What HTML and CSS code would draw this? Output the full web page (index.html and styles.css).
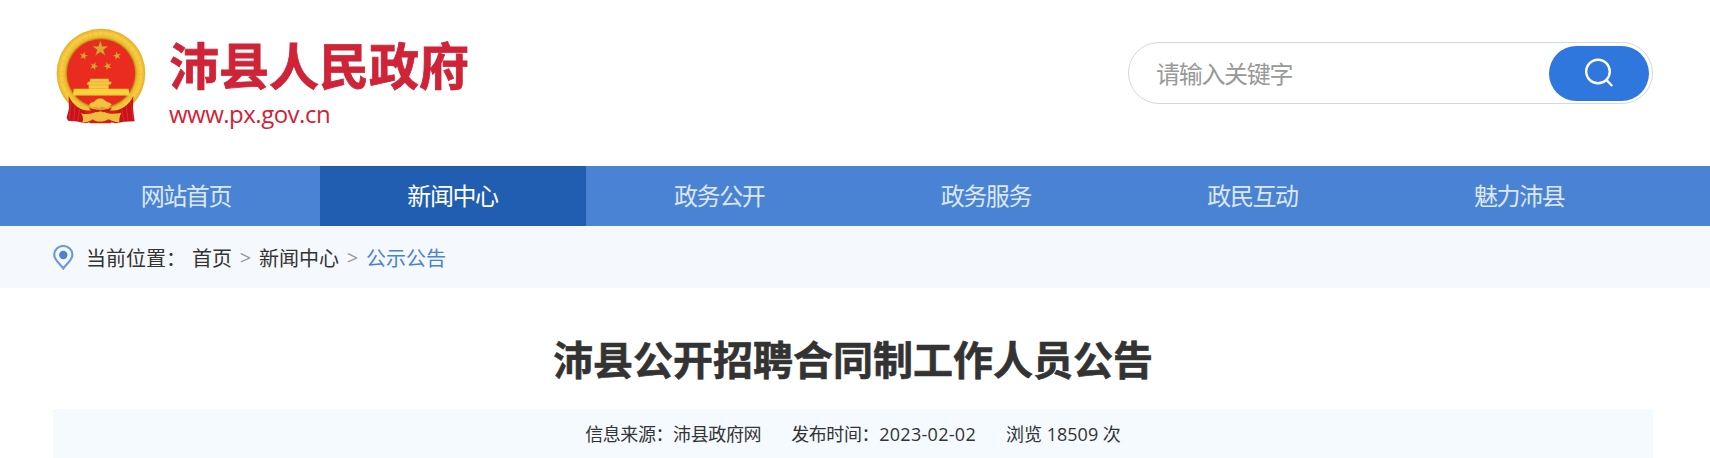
FILE: index.html
```html
<!DOCTYPE html>
<html lang="zh-CN">
  <head>
    <meta charset="UTF-8" />
    <title>沛县公开招聘合同制工作人员公告</title>
    <link rel="stylesheet" href="styles.css">
  </head>

  <body>
    <header class="header wrap">
      <svg class="emblem" viewBox="50 50 270 290">
        <defs>
          <radialGradient id="gold" gradientUnits="userSpaceOnUse" cx="185" cy="188" r="134">
            <stop offset="0.76" stop-color="#b9831a" />
            <stop offset="0.81" stop-color="#eebc2c" />
            <stop offset="0.9" stop-color="#f8d045" />
            <stop offset="1" stop-color="#e5aa25" />
          </radialGradient>
          <path id="star" d="M0-10 2.3-3.1 9.5-3.1 3.7 1.2 5.9 8.1 0 3.9-5.9 8.1-3.7 1.2-9.5-3.1-2.3-3.1Z" />
        </defs>
        <circle cx="185" cy="188" r="133" fill="url(#gold)" />
        <circle cx="185" cy="188" r="118" fill="none" stroke="#e3a826" stroke-width="14" stroke-dasharray="5 14 3 9" opacity=".2" />
        <circle cx="185" cy="188" r="102" fill="#e92b20" />
        <!-- stars -->
        <g fill="#dfa732" stroke="#a9651a" stroke-width=".5">
          <use href="#star" transform="translate(183 115) scale(2.5)" />
          <use href="#star" transform="translate(133 136) rotate(12) scale(1.3)" />
          <use href="#star" transform="translate(233 136) rotate(-12) scale(1.3)" />
          <use href="#star" transform="translate(164 167) rotate(20) scale(1.3)" />
          <use href="#star" transform="translate(205 167) rotate(-20) scale(1.3)" />
        </g>
        <!-- gate tower -->
        <path d="M153 205h54l3 9h7l-3 8h-6v13h-60v-13h-6l4-8h5Z" fill="#f6cb43" />
        <path d="M150 214h60M146 223h67" stroke="#db9b27" stroke-width="1.5" />
        <path d="M103 235h165l3 20H101Z" fill="#fbd13c" />
        <path d="M116 257h140l-18 17H137Z" fill="#e92b20" />
        <!-- ribbon -->
        <path d="M88 256c12 29 36 44 67 48l13 28-30 6-24-5-28-2-4-9 7-28Z" fill="#c81217" />
        <path d="M282 256c-12 29-38 44-69 48l-13 28 30 6 24-4 32-2-2-12-3-28Z" fill="#c81217" />
        <path d="M95 273l-5 53M107 286l-4 45M121 295l-6 38M274 273l7 53M261 286l5 45M248 295l5 38" stroke="#e02a2a" stroke-width="3" fill="none" />
        <path d="M133 300h103l-22 38h-62Z" fill="#d81b1d" />
        <path d="M125 308c18 5 36 2 47-5h20c14 8 33 9 54 4-5 11-7 19-6 29-16-1-27-8-33-10-12 9-37 10-47 0-8 6-14 9-31 10 4-10 2-20-4-28Z" fill="#eebf3d" />
        <path d="M148 289c6 11 61 13 71 0l-8 13-20 3-7-6-9 6-20-3Z" fill="#cf171b" />
        <path d="M149 284c5-12 15-6 19-14 9-8 21-8 29 0 5 6 15 4 20 13l-13 10-17-3-7 3-10-3-12 3Z" fill="#f1c341" stroke="#d29325" stroke-width="1" />
      </svg>
      <div class="site">
        <h1 class="site-name">沛县人民政府</h1>
        <p class="site-url">www.px.gov.cn</p>
      </div>
      <form class="search" action="#">
        <input class="search-input" type="text" placeholder="请输入关键字" />
        <button class="search-btn" type="button" aria-label="搜索">
          <svg width="28" height="29" viewBox="0 0 28 29">
            <circle cx="13" cy="13.5" r="11.8" />
            <path d="M21.5 22 26.5 27.3" />
          </svg>
        </button>
      </form>
    </header>

    <nav class="nav">
      <div class="nav-list wrap">
        <a class="nav-item">网站首页</a>
        <a class="nav-item active">新闻中心</a>
        <a class="nav-item">政务公开</a>
        <a class="nav-item">政务服务</a>
        <a class="nav-item">政民互动</a>
        <a class="nav-item">魅力沛县</a>
      </div>
    </nav>

    <div class="location">
      <div class="crumbs wrap">
        <svg class="pin" width="21" height="25" viewBox="0 0 21 25">
          <path d="M10.3 23.5C8 19.5 1.2 15.5 1.2 9.8a9.1 8.8 0 0 1 18.2 0c0 5.7-6.8 9.7-9.1 13.7Z" />
          <circle cx="10.3" cy="10" r="4.2" />
        </svg>
        <span class="label">当前位置：</span>
        <a>首页</a>
        <i>&gt;</i>
        <a>新闻中心</a>
        <i>&gt;</i>
        <a class="current">公示公告</a>
      </div>
    </div>

    <main class="article wrap">
      <h2 class="title">沛县公开招聘合同制工作人员公告</h2>
      <div class="meta">
        <span>信息来源：沛县政府网</span>
        <span>发布时间：<time>2023-02-02</time></span>
        <span>浏览 18509 次</span>
      </div>
    </main>
  </body>
</html>
```

FILE: styles.css
```css
* {
  box-sizing: border-box;
}

body {
  margin: 0;
  height: 458px;
  overflow: hidden;
  background: #fff;
  color: #333;
  font-family: "Open Sans", "Noto Sans CJK SC", sans-serif;
}

h1,
h2,
p {
  margin: 0;
}

.wrap {
  width: 1600px;
  margin-left: 53px;
}

/* header */
.header {
  display: flex;
  align-items: flex-start;
  height: 166px;
}

.emblem {
  width: 90px;
  height: 97px;
  margin: 27px 0 0 3px;
}

.site {
  margin: 35px 0 0 23px;
  color: #cf2338;
}

.site-name {
  font-size: 50px;
  font-weight: 700;
  line-height: 62px;
  -webkit-text-stroke: 0.8px;
}

.site-url {
  font-size: 24px;
  letter-spacing: -0.5px;
  line-height: 34px;
}

.search {
  display: flex;
  align-items: center;
  width: 525px;
  height: 62px;
  margin: 42px 0 0 auto;
  padding: 0 3px 0 27px;
  border: 1px solid #d0dae5;
  border-radius: 31px;
}

.search-input {
  flex: 1;
  min-width: 0;
  padding: 0;
  border: 0;
  outline: none;
  font: inherit;
  font-size: 24px;
  letter-spacing: -1.3px;
}

.search-input::placeholder {
  color: #999;
}

.search-btn {
  display: flex;
  align-items: center;
  justify-content: center;
  width: 100px;
  height: 55px;
  padding: 0 0 2px;
  border: 0;
  border-radius: 28px;
  background: #2f77dc;
}

.search-btn svg {
  fill: none;
  stroke: #fff;
  stroke-width: 2.4;
  stroke-linecap: round;
}

/* nav */
.nav {
  background: #4a83d3;
}

.nav-list {
  display: flex;
}

.nav-item {
  flex: 1;
  height: 60px;
  padding-right: 1px;
  color: #dce7f6;
  font-size: 24px;
  letter-spacing: -1.4px;
  line-height: 60px;
  text-align: center;
}

.nav-item.active {
  background: #215eb2;
  color: #fff;
}

/* breadcrumb */
.location {
  background: #f5f8fd;
}

.crumbs {
  display: flex;
  align-items: center;
  height: 62px;
  font-size: 20px;
}

.pin {
  fill: none;
  stroke: #6c9bdd;
  stroke-width: 2.2;
}

.pin circle {
  fill: #4a83d3;
  stroke: none;
}

.label {
  margin: 0 6px 0 12px;
}

.crumbs i {
  width: 27px;
  color: #999;
  font-style: normal;
  text-align: center;
}

.current {
  color: #4a83d3;
}

/* article */
.title {
  padding-top: 42px;
  height: 121px;
  font-size: 40px;
  font-weight: 700;
  line-height: 60px;
  text-align: center;
  -webkit-text-stroke: 0.6px;
}

.meta {
  display: flex;
  justify-content: center;
  gap: 30px;
  height: 60px;
  background: #f4faff;
  font-size: 18px;
  letter-spacing: -0.4px;
  line-height: 50px;
}

.meta time {
  letter-spacing: 0.3px;
}

.meta span:last-child {
  letter-spacing: 0;
}
```
